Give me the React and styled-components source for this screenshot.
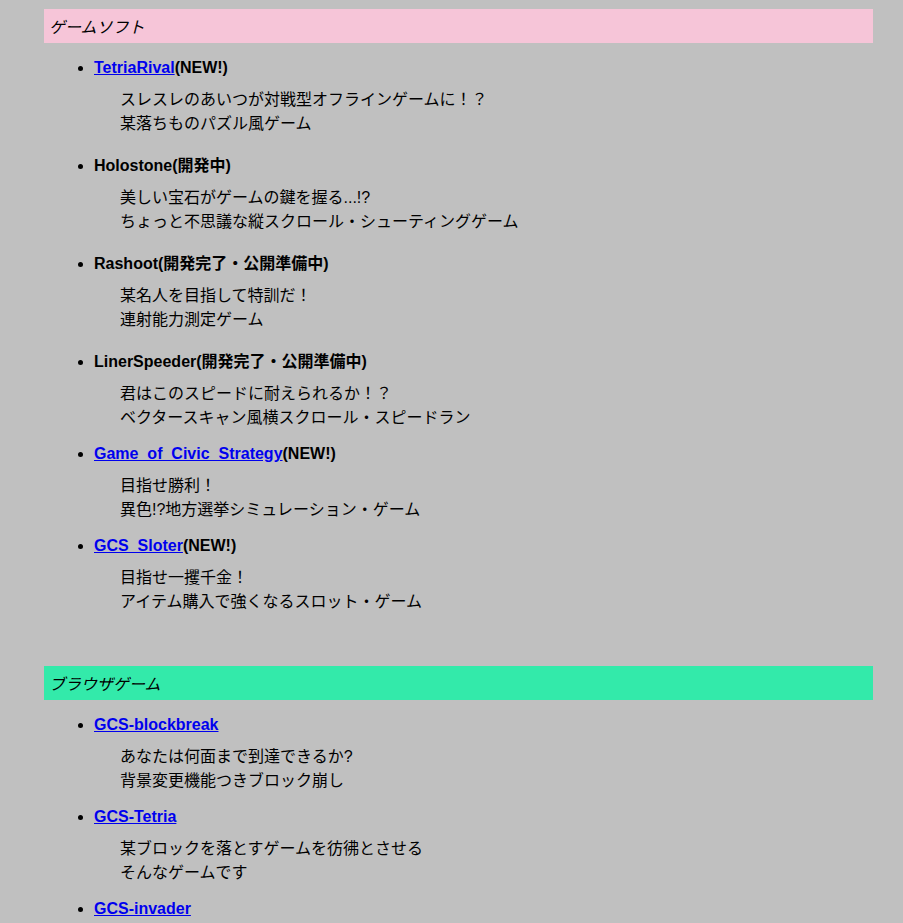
import styled, { createGlobalStyle } from 'styled-components'

const GlobalStyle = createGlobalStyle`
    body {
        margin: 0;
        background-color: #c0c0c0;
        color: #000000;
        font-family: "Liberation Sans", "Noto Sans CJK JP", sans-serif;
        font-size: 16px;
        line-height: 24px;
    }
`

const softList = [
    { name: 'TetriaRival', link: true, note: '(NEW!)', lines: ['スレスレのあいつが対戦型オフラインゲームに！？', '某落ちものパズル風ゲーム'], spaced: true },
    { name: 'Holostone', note: '(開発中)', lines: ['美しい宝石がゲームの鍵を握る...!?', 'ちょっと不思議な縦スクロール・シューティングゲーム'], spaced: true },
    { name: 'Rashoot', note: '(開発完了・公開準備中)', lines: ['某名人を目指して特訓だ！', '連射能力測定ゲーム'], spaced: true },
    { name: 'LinerSpeeder', note: '(開発完了・公開準備中)', lines: ['君はこのスピードに耐えられるか！？', 'ベクタースキャン風横スクロール・スピードラン'] },
    { name: 'Game_of_Civic_Strategy', link: true, note: '(NEW!)', lines: ['目指せ勝利！', '異色!?地方選挙シミュレーション・ゲーム'] },
    { name: 'GCS_Sloter', link: true, note: '(NEW!)', lines: ['目指せ一攫千金！', 'アイテム購入で強くなるスロット・ゲーム'] },
]

const browserList = [
    { name: 'GCS-blockbreak', link: true, lines: ['あなたは何面まで到達できるか?', '背景変更機能つきブロック崩し'] },
    { name: 'GCS-Tetria', link: true, lines: ['某ブロックを落とすゲームを彷彿とさせる', 'そんなゲームです'] },
    { name: 'GCS-invader', link: true, lines: ['懐かしのインベーダーゲーム', 'シンプルなシューティング'] },
]

const GameEntry = ({ game }) => (
    <Item $spaced={game.spaced}>
        <Title>
            {game.link ? <GameLink href="#">{game.name}</GameLink> : game.name}
            {game.note}
        </Title>
        <Description>
            {game.lines.map((line, i) => (
                <span key={i}>{line}<br /></span>
            ))}
        </Description>
    </Item>
)

const App = () => {
    return (
        <>
        <GlobalStyle />
        <Page>
            <Section>
                <SectionTitle $color="#f6c5d8">ゲームソフト</SectionTitle>
                <GameList>
                    {softList.map(game => <GameEntry key={game.name} game={game} />)}
                </GameList>
            </Section>
            <Section>
                <SectionTitle $color="#33eaaa">ブラウザゲーム</SectionTitle>
                <GameList>
                    {browserList.map(game => <GameEntry key={game.name} game={game} />)}
                </GameList>
            </Section>
        </Page>
        </>
    )
}

const Page = styled.div`
    width: 829px;
    padding: 9px 0 0 44px;
`

const Section = styled.section`
    margin-bottom: 52px;
`

const SectionTitle = styled.h2`
    margin: 0;
    padding: 5px 5px;
    background-color: ${props => props.$color};
    font-family: "Noto Sans CJK JP", sans-serif;
    font-size: 16px;
    font-weight: normal;
    font-style: italic;
    line-height: 24px;
`

const GameList = styled.ul`
    margin: 13px 0 0;
    padding-left: 50px;
    list-style: disc;
`

const Item = styled.li`
    margin-bottom: ${props => props.$spaced ? '18px' : '12px'};

    &:last-child {
        margin-bottom: 0;
    }
`

const Title = styled.div`
    font-weight: bold;
`

const Description = styled.div`
    margin: 8px 0 0 26px;
`

const GameLink = styled.a`
    color: #0000ee;
    text-decoration: underline;
`

export default App
